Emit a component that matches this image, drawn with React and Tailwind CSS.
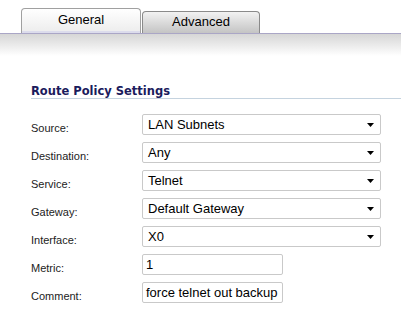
import React from "react";

function Arrow() {
  return (
    <svg width="7" height="4" viewBox="0 0 7 4" className="shrink-0">
      <path d="M0 0 H7 L3.5 4 Z" fill="#000" />
    </svg>
  );
}

function Select({ value }) {
  return (
    <div className="flex h-[21px] w-[239px] items-center justify-between rounded-[2px] border border-[#c9c9c9] bg-white pl-[5px] pr-[6px] text-[13px] leading-[15px] text-black">
      <span>{value}</span>
      <Arrow />
    </div>
  );
}

function Input({ value }) {
  return (
    <div className="flex h-[21px] w-[141px] items-center rounded-[2px] border border-[#c9c9c9] bg-white pl-[3px] text-[13px] leading-[15px] text-black whitespace-nowrap">
      {value}
    </div>
  );
}

function Row({ label, children }) {
  return (
    <div className="flex h-[28px] items-start">
      <div className="w-[111px] pt-[8px] text-[11px] leading-[13px] text-[#222]">{label}</div>
      {children}
    </div>
  );
}

export default function App() {
  return (
    <div className="h-[310px] w-[401px] overflow-hidden bg-white" style={{ fontFamily: '"Liberation Sans", Arial, sans-serif' }}>
      <div className="flex items-end border-b border-[#aaa6c6] pl-[21px] pt-[8px]">
        <div className="flex h-[25px] w-[120px] items-center justify-center rounded-t-[4px] border border-b-0 border-[#a0a0a0] bg-gradient-to-b from-white to-[#ececec] pb-[2px] text-[13px] text-black shadow-[inset_0_-2px_0_#dcdcec]">
          General
        </div>
        <div className="ml-[1px] flex h-[22px] w-[118px] items-center justify-center rounded-t-[4px] border border-b-0 border-[#8a8a8a] bg-gradient-to-b from-[#f2f2f2] to-[#c4c4c4] pb-[2px] text-[13px] text-black">
          Advanced
        </div>
      </div>
      <div className="h-[22px] bg-gradient-to-b from-[#d6d6d6] to-white" />
      <div className="pl-[31px] pt-[29px]">
        <div
          className="border-b border-[#c5d3df] text-[11.5px] font-bold leading-[13px] text-[#1b1b5c]"
          style={{ fontFamily: '"DejaVu Sans", Verdana, sans-serif' }}
        >
          Route Policy Settings
        </div>
        <div className="pt-[15px]">
          <Row label="Source:"><Select value="LAN Subnets" /></Row>
          <Row label="Destination:"><Select value="Any" /></Row>
          <Row label="Service:"><Select value="Telnet" /></Row>
          <Row label="Gateway:"><Select value="Default Gateway" /></Row>
          <Row label="Interface:"><Select value="X0" /></Row>
          <Row label="Metric:"><Input value="1" /></Row>
          <Row label="Comment:"><Input value="force telnet out backup" /></Row>
        </div>
      </div>
    </div>
  );
}
